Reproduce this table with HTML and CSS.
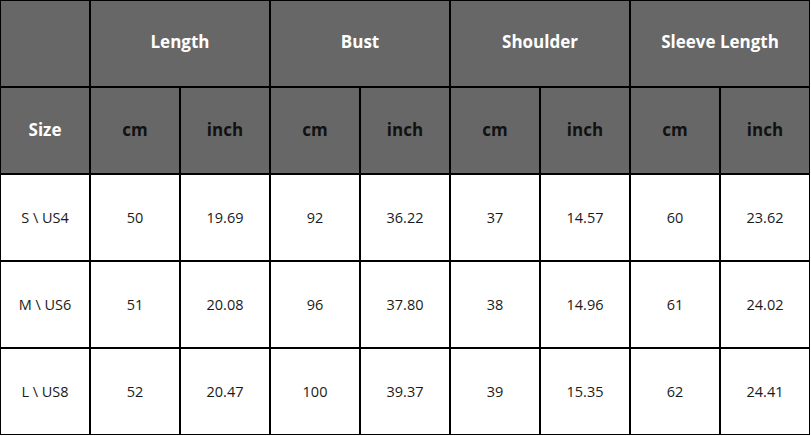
FILE: index.html
```html
<!DOCTYPE html>
<html>
<head>
<meta charset="utf-8">
<link rel="stylesheet" href="styles.css">
</head>
<body>
<div class="grid">
  <div class="cell head top"></div>
  <div class="cell head top span2 white">Length</div>
  <div class="cell head top span2 white">Bust</div>
  <div class="cell head top span2 white">Shoulder</div>
  <div class="cell head top span2 white">Sleeve Length</div>

  <div class="cell head white">Size</div>
  <div class="cell head">cm</div>
  <div class="cell head">inch</div>
  <div class="cell head">cm</div>
  <div class="cell head">inch</div>
  <div class="cell head">cm</div>
  <div class="cell head">inch</div>
  <div class="cell head">cm</div>
  <div class="cell head">inch</div>

  <div class="cell">S \ US4</div>
  <div class="cell">50</div>
  <div class="cell">19.69</div>
  <div class="cell">92</div>
  <div class="cell">36.22</div>
  <div class="cell">37</div>
  <div class="cell">14.57</div>
  <div class="cell">60</div>
  <div class="cell">23.62</div>

  <div class="cell">M \ US6</div>
  <div class="cell">51</div>
  <div class="cell">20.08</div>
  <div class="cell">96</div>
  <div class="cell">37.80</div>
  <div class="cell">38</div>
  <div class="cell">14.96</div>
  <div class="cell">61</div>
  <div class="cell">24.02</div>

  <div class="cell">L \ US8</div>
  <div class="cell">52</div>
  <div class="cell">20.47</div>
  <div class="cell">100</div>
  <div class="cell">39.37</div>
  <div class="cell">39</div>
  <div class="cell">15.35</div>
  <div class="cell">62</div>
  <div class="cell">24.41</div>
</div>
</body>
</html>
```
FILE: styles.css
```css
html, body {
  margin: 0;
  padding: 0;
  background: #fff;
}
.grid {
  width: 810px;
  height: 435px;
  box-sizing: border-box;
  background: #000;
  padding: 1px;
  display: grid;
  grid-template-columns: repeat(9, 88px);
  grid-template-rows: repeat(5, 85px);
  gap: 2px;
  font-family: "Open Sans", "Noto Sans", sans-serif;
}
.cell {
  background: #fff;
  display: flex;
  align-items: center;
  justify-content: center;
  font-size: 14.5px;
  color: #1a1a1a;
}
.head {
  background: #676767;
  font-weight: 700;
  font-size: 17px;
  color: #111;
  padding-bottom: 2px;
}
.top {
  padding-bottom: 4px;
}
.white {
  color: #fff;
}
.span2 {
  grid-column: span 2;
}
```
